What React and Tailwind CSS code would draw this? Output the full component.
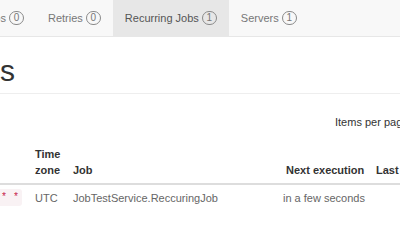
import React from "react";

const Badge = ({ count }) => (
  <span className="inline-flex items-center justify-center h-[14px] min-w-[15px] px-[3px] rounded-full border border-[#8a8a8a] text-[10px] leading-none text-[#777]">
    {count}
  </span>
);

const tabs = [
  { label: "Jobs", count: 0 },
  { label: "Retries", count: 0 },
  { label: "Recurring Jobs", count: 1, active: true },
  { label: "Servers", count: 1 },
];

export default function App() {
  return (
    <div className="w-[400px] h-[250px] overflow-hidden bg-white font-['Liberation_Sans',Arial,sans-serif]">
      {/* Navbar */}
      <div className="h-[37px] bg-[#f8f8f8] border-b border-[#e7e7e7] flex">
        {tabs.map((tab, i) =>
          i === 0 ? (
            <div key={tab.label} className="w-[36px] flex justify-end shrink-0">
              <div className="flex items-center gap-[3px] pr-[12px] whitespace-nowrap text-[11px] text-[#777]">
                {tab.label} <Badge count={tab.count} />
              </div>
            </div>
          ) : (
            <div
              key={tab.label}
              className={`flex items-center gap-[3px] px-[12px] whitespace-nowrap text-[11px] ${
                tab.active ? "bg-[#e7e7e7] text-[#555]" : "text-[#777]"
              }`}
            >
              {tab.label} <Badge count={tab.count} />
            </div>
          )
        )}
      </div>

      {/* Page header */}
      <div className="mt-[17px] pb-[6px] border-b border-[#eee]">
        <div className="w-[15px] flex justify-end">
          <h1 className="whitespace-nowrap text-[30px] leading-[33px] text-[#333]">
            Recurring jobs
          </h1>
        </div>
      </div>

      {/* Toolbar */}
      <div className="mt-[20px] pl-[335px] whitespace-nowrap text-[11px] leading-[16px] text-[#333]">
        Items per page:
      </div>

      {/* Table */}
      <table className="mt-[16px] table-fixed border-collapse w-[420px] text-[11px] leading-[16px]">
        <colgroup>
          <col className="w-[29px]" />
          <col className="w-[38px]" />
          <col className="w-[210px]" />
          <col className="w-[93px]" />
          <col />
        </colgroup>
        <thead>
          <tr className="border-b-2 border-[#ddd] text-left align-bottom font-bold text-[#333]">
            <th className="pb-[5px]"></th>
            <th className="pl-[6px] pb-[5px] font-bold">
              Time
              <br />
              zone
            </th>
            <th className="pl-[6px] pb-[5px] font-bold">Job</th>
            <th className="pl-[9px] pb-[5px] font-bold whitespace-nowrap">Next execution</th>
            <th className="pl-[6px] pb-[5px] font-bold whitespace-nowrap">Last execution</th>
          </tr>
        </thead>
        <tbody>
          <tr className="text-[#666]">
            <td className="pt-[4px] pb-[6px] pr-[7px]">
              <div className="flex justify-end">
                <code className="whitespace-nowrap bg-[#f9f2f4] text-[#c7254e] rounded-[3px] px-[3px] py-[1px] text-[10px] leading-[15px] font-['Liberation_Mono',monospace]">
                  * * * * *
                </code>
              </div>
            </td>
            <td className="pl-[6px] pt-[4px] pb-[6px]">UTC</td>
            <td className="pl-[6px] pt-[4px] pb-[6px] whitespace-nowrap">JobTestService.ReccuringJob</td>
            <td className="pl-[6px] pt-[4px] pb-[6px] whitespace-nowrap">in a few seconds</td>
            <td className="pl-[6px] pt-[4px] pb-[6px]"></td>
          </tr>
        </tbody>
      </table>
    </div>
  );
}
